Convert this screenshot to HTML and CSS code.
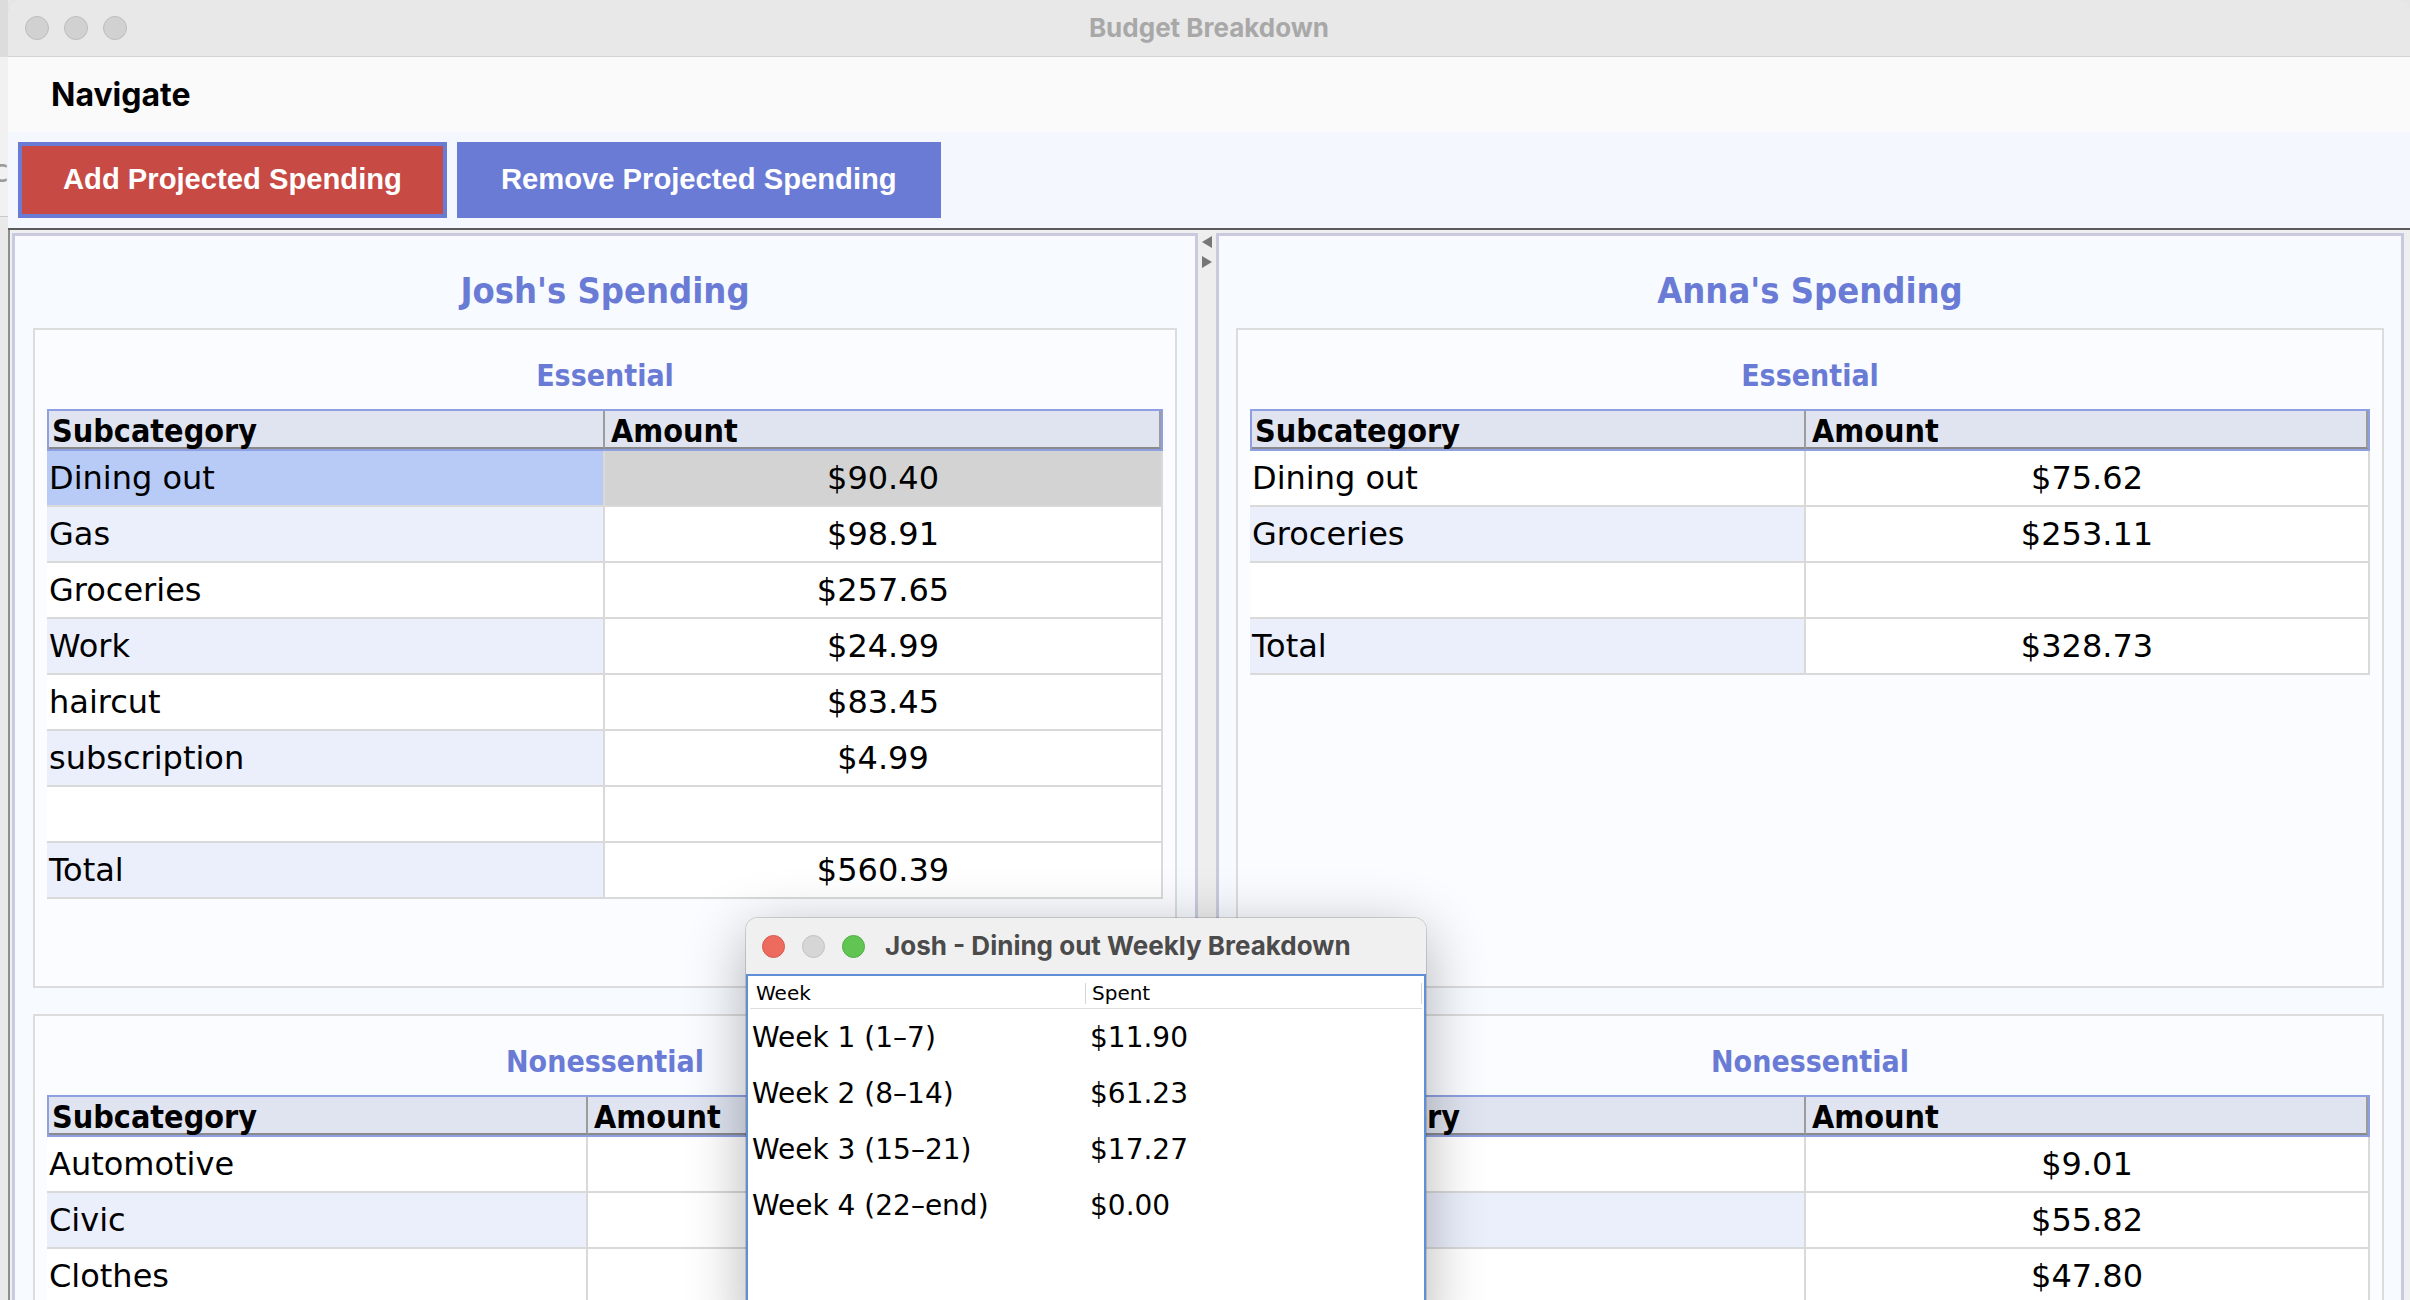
FILE: index.html
```html
<!DOCTYPE html>
<html lang="en">
<head>
<meta charset="utf-8">
<title>Budget Breakdown</title>
<link rel="stylesheet" href="styles.css">
</head>
<body>
<div class="desk">
  <div class="desk-top"></div>
  <div class="desk-mid"><span class="desk-c">c</span></div>
  <div class="desk-low"></div>
</div>
<div class="win">
  <div class="titlebar">
    <div class="lights">
      <span class="light"></span><span class="light"></span><span class="light"></span>
    </div>
    <div class="wtitle">Budget Breakdown</div>
    <div></div>
  </div>
  <div class="menubar"><span class="menu">Navigate</span></div>
  <div class="toolbar">
    <button class="btn btn-add">Add Projected Spending</button>
    <button class="btn btn-remove">Remove Projected Spending</button>
  </div>
  <div class="split">
    <section class="panel panel-left">
      <h2 class="ptitle">Josh's Spending</h2>
      <div class="boxes">
        <div class="box">
          <h3 class="btitle">Essential</h3>
          <div class="tbl tbl-je">
            <div class="thead"><div class="th">Subcategory</div><div class="th">Amount</div></div>
            <div class="tr sel"><div class="td name">Dining out</div><div class="td amt">$90.40</div></div>
            <div class="tr odd"><div class="td name">Gas</div><div class="td amt">$98.91</div></div>
            <div class="tr"><div class="td name">Groceries</div><div class="td amt">$257.65</div></div>
            <div class="tr odd"><div class="td name">Work</div><div class="td amt">$24.99</div></div>
            <div class="tr"><div class="td name">haircut</div><div class="td amt">$83.45</div></div>
            <div class="tr odd"><div class="td name">subscription</div><div class="td amt">$4.99</div></div>
            <div class="tr"><div class="td name"></div><div class="td amt"></div></div>
            <div class="tr odd"><div class="td name">Total</div><div class="td amt">$560.39</div></div>
          </div>
        </div>
        <div class="box">
          <h3 class="btitle">Nonessential</h3>
          <div class="tbl tbl-jn">
            <div class="thead"><div class="th">Subcategory</div><div class="th">Amount</div></div>
            <div class="tr"><div class="td name">Automotive</div><div class="td amt"></div></div>
            <div class="tr odd"><div class="td name">Civic</div><div class="td amt"></div></div>
            <div class="tr"><div class="td name">Clothes</div><div class="td amt"></div></div>
          </div>
        </div>
      </div>
    </section>
    <div class="divider"><span class="arr arr-l"></span><span class="arr arr-r"></span></div>
    <section class="panel panel-right">
      <h2 class="ptitle">Anna's Spending</h2>
      <div class="boxes">
        <div class="box">
          <h3 class="btitle">Essential</h3>
          <div class="tbl tbl-a">
            <div class="thead"><div class="th">Subcategory</div><div class="th">Amount</div></div>
            <div class="tr"><div class="td name">Dining out</div><div class="td amt">$75.62</div></div>
            <div class="tr odd"><div class="td name">Groceries</div><div class="td amt">$253.11</div></div>
            <div class="tr"><div class="td name"></div><div class="td amt"></div></div>
            <div class="tr odd"><div class="td name">Total</div><div class="td amt">$328.73</div></div>
          </div>
        </div>
        <div class="box">
          <h3 class="btitle">Nonessential</h3>
          <div class="tbl tbl-a">
            <div class="thead"><div class="th">Subcategory</div><div class="th">Amount</div></div>
            <div class="tr"><div class="td name">Household</div><div class="td amt">$9.01</div></div>
            <div class="tr odd"><div class="td name"></div><div class="td amt">$55.82</div></div>
            <div class="tr"><div class="td name"></div><div class="td amt">$47.80</div></div>
          </div>
        </div>
      </div>
    </section>
  </div>
</div>

<div class="pop">
  <div class="pop-bar">
    <span class="plight red"></span><span class="plight grey"></span><span class="plight green"></span>
    <span class="pop-title">Josh - Dining out Weekly Breakdown</span>
  </div>
  <div class="pop-body">
    <div class="pop-head"><div class="ph">Week</div><div class="ph">Spent</div></div>
    <div class="prow"><div class="pc">Week 1 (1–7)</div><div class="pc pv">$11.90</div></div>
    <div class="prow"><div class="pc">Week 2 (8–14)</div><div class="pc pv">$61.23</div></div>
    <div class="prow"><div class="pc">Week 3 (15–21)</div><div class="pc pv">$17.27</div></div>
    <div class="prow"><div class="pc">Week 4 (22–end)</div><div class="pc pv">$0.00</div></div>
  </div>
</div>
</body>
</html>
```
FILE: styles.css
```css
html, body {
  margin: 0;
  padding: 0;
}
body {
  width: 2410px;
  height: 1300px;
  overflow: hidden;
  display: flex;
  position: relative;
  background: #e6e6e6;
  font-family: "DejaVu Sans", sans-serif;
}

/* desktop strip behind the window */
.desk {
  flex: 0 0 8px;
  display: flex;
  flex-direction: column;
  overflow: hidden;
}
.desk-top { flex: 0 0 57px; background: #dcdcdc; }
.desk-mid {
  flex: 0 0 160px;
  background: #f1f1f1;
  border-bottom: 1px solid #c9c9c9;
  box-sizing: border-box;
}
.desk-c {
  display: block;
  margin: 98px 0 0 -9px;
  font: 32px/32px "DejaVu Sans", sans-serif;
  color: #9a9a9a;
}
.desk-low { flex: 1; background: #e9e9e9; }

/* main window */
.win {
  flex: 0 0 2402px;
  height: 1300px;
  display: flex;
  flex-direction: column;
  border-radius: 12px 12px 0 0;
  overflow: hidden;
  background: #eeeeee;
  box-shadow: inset 1px 0 0 #cfcfcf;
}
.titlebar {
  flex: 0 0 57px;
  box-sizing: border-box;
  background: #e8e8e8;
  border-bottom: 1px solid #d3d3d3;
  display: grid;
  grid-template-columns: 1fr auto 1fr;
  align-items: center;
}
.lights {
  display: flex;
  gap: 15px;
  padding-left: 17px;
}
.light {
  width: 24px;
  height: 24px;
  box-sizing: border-box;
  border-radius: 50%;
  background: #d1d1d1;
  border: 1px solid #bdbdbd;
}
.wtitle {
  font: 700 26px/30px Inter, "Liberation Sans", sans-serif;
  color: #a8a8a8;
}
.menubar {
  flex: 0 0 75px;
  background: #fafafa;
  display: flex;
  align-items: center;
  padding-left: 43px;
}
.menu {
  font: 700 32px/36px Inter, "Liberation Sans", sans-serif;
  color: #000;
}
.toolbar {
  flex: 0 0 98px;
  box-sizing: border-box;
  padding: 10px;
  display: flex;
  gap: 10px;
  background: #f4f7fe;
  border-bottom: 2px solid #5a5a5a;
}
.btn {
  height: 76px;
  box-sizing: border-box;
  border: 0;
  margin: 0;
  padding: 0 44px;
  font: 700 29.2px/1 "Liberation Sans", Arial, sans-serif;
  color: #fff;
  background: #6a7bd6;
}
.btn-add {
  background: #c84a44;
  border: 4px solid #6a7bd6;
  padding: 0 41px;
}

/* split pane */
.split {
  flex: 1;
  min-height: 0;
  display: flex;
  padding: 3px 0 0 2px;
  border-left: 2px solid #8d8d8d;
  background: #efefef;
}
.panel {
  box-sizing: border-box;
  border: 3px solid #cacadf;
  border-bottom: 0;
  background: #f7faff;
  padding: 0 18px;
  overflow: hidden;
}
.panel-left { flex: 0 0 1186px; }
.panel-right { flex: 1; margin-right: 6px; padding: 0 17px; }
.divider {
  flex: 0 0 18px;
  display: flex;
  flex-direction: column;
  align-items: center;
  padding-top: 3px;
  gap: 8px;
  background: #eeeeee;
}
.arr {
  width: 0;
  height: 0;
  border-top: 6px solid transparent;
  border-bottom: 6px solid transparent;
}
.arr-l { border-right: 10px solid #777; }
.arr-r { border-left: 10px solid #777; }

.ptitle {
  margin: 0 0 12px;
  padding-top: 30px;
  line-height: 50px;
  text-align: center;
  font-family: "DejaVu Sans Condensed", "DejaVu Sans", sans-serif;
  font-stretch: condensed;
  font-weight: 700;
  font-size: 36px;
  color: #6a7bd6;
}
.boxes {
  display: grid;
  grid-auto-rows: 660px;
  row-gap: 26px;
}
.box {
  box-sizing: border-box;
  border: 2px solid #dcdcdc;
  background: #fafcff;
  padding: 0 12px;
}
.btitle {
  margin: 0 0 13px;
  padding-top: 26px;
  line-height: 40px;
  text-align: center;
  font-family: "DejaVu Sans Condensed", "DejaVu Sans", sans-serif;
  font-stretch: condensed;
  font-weight: 700;
  font-size: 30px;
  color: #6a7bd6;
}

/* tables */
.tbl { --c1: 558px; }
.tbl-jn { --c1: 541px; }
.tbl-a { --c1: 556px; }
.thead {
  display: grid;
  grid-template-columns: calc(var(--c1) - 2px) 1fr;
  height: 42px;
  box-sizing: border-box;
  border: 2px solid #8ea0e2;
  background: #dfe4f0;
}
.th {
  height: 38px;
  box-sizing: border-box;
  padding: 4px 0 0 3px;
  line-height: 32px;
  border-bottom: 2px solid #8a8a8a;
  border-right: 2px solid #9c9c9c;
  font-family: "DejaVu Sans Condensed", "DejaVu Sans", sans-serif;
  font-stretch: condensed;
  font-weight: 700;
  font-size: 32px;
  color: #000;
}
.th + .th { padding-left: 6px; }
.tr {
  display: grid;
  grid-template-columns: var(--c1) 1fr;
  background: #fff;
}
.td {
  height: 56px;
  box-sizing: border-box;
  border-bottom: 2px solid #d9d9d9;
  border-right: 2px solid #d9d9d9;
  line-height: 55px;
  font-size: 32px;
  color: #000;
  white-space: nowrap;
  overflow: hidden;
}
.name { padding-left: 2px; }
.amt { text-align: center; }
.odd .name { background: #ebeffc; }
.sel .name { background: #b8cbf7; }
.sel .amt { background: #d3d3d3; }

/* popup window */
.pop {
  position: absolute;
  left: 746px;
  top: 918px;
  width: 680px;
  height: 420px;
  box-sizing: border-box;
  border-radius: 12px 12px 0 0;
  background: #fff;
  overflow: hidden;
  box-shadow: 0 0 0 1px rgba(0, 0, 0, 0.14), 0 14px 60px rgba(0, 0, 0, 0.3);
  display: flex;
  flex-direction: column;
}
.pop-bar {
  flex: 0 0 56px;
  display: flex;
  align-items: center;
  padding-left: 16px;
  gap: 17px;
  background: #f0f0f0;
}
.plight {
  width: 23px;
  height: 23px;
  box-sizing: border-box;
  border-radius: 50%;
}
.red { background: #ec6a5e; border: 1px solid #d65a4f; }
.grey { background: #d6d6d6; border: 1px solid #c2c2c2; }
.green { background: #61c554; border: 1px solid #52ad44; }
.pop-title {
  margin-left: 3px;
  font: 700 26px/30px Inter, "Liberation Sans", sans-serif;
  color: #4b4b4b;
}
.pop-body {
  flex: 1;
  border: 2px solid #5f8fd6;
  border-bottom: 0;
  padding: 0 2px;
}
.pop-head {
  display: grid;
  grid-template-columns: 336px 1fr;
  margin-top: 6px;
  padding-top: 1px;
  height: 27px;
  box-sizing: border-box;
  border-bottom: 1px solid #dedede;
}
.ph {
  height: 21px;
  line-height: 21px;
  font-size: 20px;
  padding-left: 6px;
  border-right: 1px solid #d4d4d4;
  color: #000;
}
.prow {
  display: grid;
  grid-template-columns: 336px 1fr;
  height: 56px;
}
.pc {
  line-height: 57px;
  font-size: 28px;
  padding-left: 2px;
  color: #000;
  white-space: nowrap;
}
.pv { padding-left: 4px; }
```
